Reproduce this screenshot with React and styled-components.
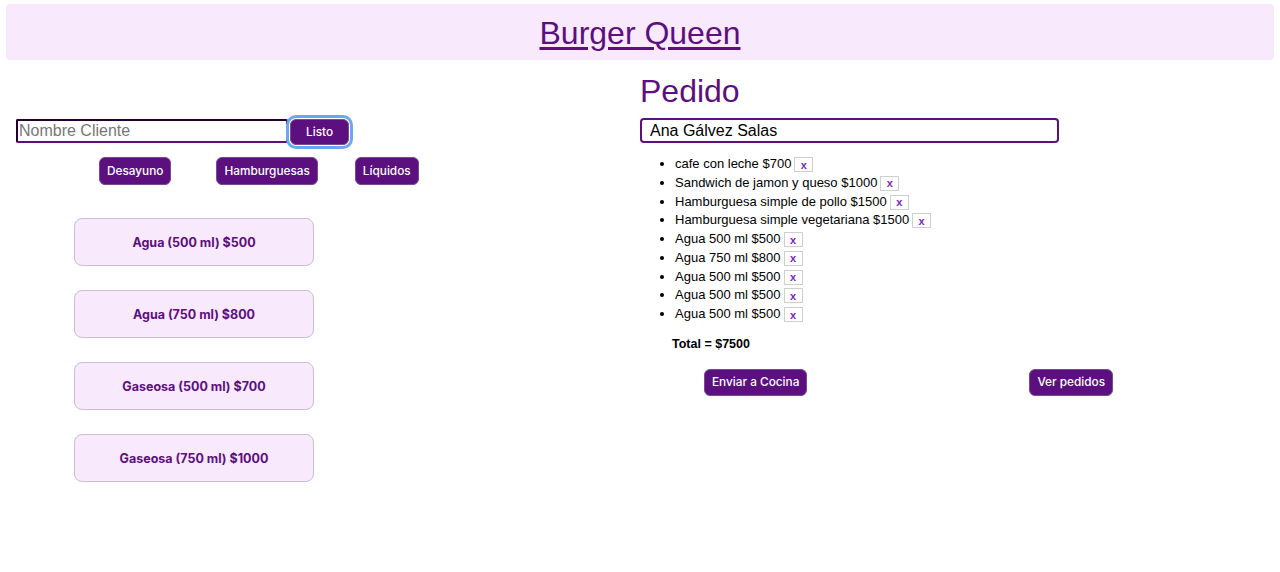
import React from 'react';
import styled, { createGlobalStyle, css } from 'styled-components';

const GlobalStyle = createGlobalStyle`
  body {
    margin: 0;
    background: #ffffff;
    font-family: "Liberation Sans", Arial, sans-serif;
  }
`;

const purple = '#5c0f7f';

const Header = styled.header`
  margin: 4px 6px 0;
  height: 56px;
  background: #f8eafc;
  border-radius: 4px;
  display: flex;
  align-items: center;
  justify-content: center;
`;

const Title = styled.a`
  font-family: "Liberation Sans", Arial, sans-serif;
  font-size: 32px;
  color: ${purple};
  text-decoration: underline;
  text-underline-offset: 3px;
  margin-top: 2px;
`;

const Main = styled.main`
  display: grid;
  grid-template-columns: 640px 640px;
`;

const LeftCol = styled.section`
  padding: 59px 0 0 16px;
`;

const NameRow = styled.div`
  display: flex;
  align-items: flex-start;
`;

const NameInput = styled.input`
  box-sizing: border-box;
  width: 272px;
  height: 24px;
  border: 2px solid ${purple};
  border-top-color: #220030;
  border-left-color: #220030;
  border-radius: 2px;
  padding: 0 1px;
  font-family: "Liberation Sans", Arial, sans-serif;
  font-size: 16px;
  outline: none;
  &::placeholder {
    color: #777777;
  }
`;

const PurpleButton = styled.button`
  height: ${(p) => p.h || 28}px;
  padding: 0 7px;
  background: ${purple};
  color: #ffffff;
  border: 1px solid #7a4a90;
  border-radius: 6px;
  font-family: Inter, "Noto Sans", sans-serif;
  font-size: 11.8px;
  font-weight: 500;
  cursor: pointer;
  margin-left: ${(p) => p.ml || 0}px;
  ${(p) =>
    p.focused &&
    css`
      outline: 3px solid #6aa8f2;
      outline-offset: 1px;
    `}
`;

const Categories = styled.div`
  display: flex;
  margin-top: 12px;
`;

const CardList = styled.div`
  display: flex;
  flex-direction: column;
  gap: 24px;
  margin: 33px 0 0 58px;
`;

const ProductCard = styled.button`
  box-sizing: border-box;
  width: 240px;
  height: 48px;
  background: #f8eafc;
  border: 1px solid #cbbdd0;
  border-radius: 8px;
  color: ${purple};
  font-family: Inter, "Noto Sans", sans-serif;
  font-size: 12.5px;
  font-weight: 700;
  cursor: pointer;
`;

const RightCol = styled.section`
  padding-top: 13px;
`;

const OrderTitle = styled.h2`
  margin: 0;
  font-size: 32px;
  font-weight: 400;
  color: ${purple};
  line-height: 37px;
`;

const ClientInput = styled.input`
  box-sizing: border-box;
  display: block;
  margin-top: 8px;
  width: 419px;
  height: 25px;
  border: 2px solid ${purple};
  border-radius: 4px;
  padding: 0 8px;
  font-family: "Liberation Sans", Arial, sans-serif;
  font-size: 16px;
  color: #000;
  outline: none;
`;

const ItemList = styled.ul`
  margin: 12px 0 0;
  padding-left: 35px;
  font-size: 13px;
  line-height: 18.75px;
`;

const RemoveButton = styled.button`
  box-sizing: border-box;
  width: 19px;
  height: 15px;
  margin-left: 3px;
  padding: 0;
  background: #ffffff;
  border: 1px solid #cfcfcf;
  color: #7a1fc2;
  font-family: "Liberation Sans", Arial, sans-serif;
  font-size: 11px;
  font-weight: 700;
  line-height: 12px;
  vertical-align: middle;
`;

const Total = styled.p`
  margin: 13px 0 0 32px;
  font-size: 12.5px;
  font-weight: 700;
`;

const Actions = styled.div`
  display: flex;
  margin-top: 18px;
`;

const items = [
  'cafe con leche $700',
  'Sandwich de jamon y queso $1000',
  'Hamburguesa simple de pollo $1500',
  'Hamburguesa simple vegetariana $1500',
  'Agua 500 ml $500',
  'Agua 750 ml $800',
  'Agua 500 ml $500',
  'Agua 500 ml $500',
  'Agua 500 ml $500',
];

const products = [
  'Agua (500 ml) $500',
  'Agua (750 ml) $800',
  'Gaseosa (500 ml) $700',
  'Gaseosa (750 ml) $1000',
];

export default function App() {
  return (
    <>
      <GlobalStyle />
      <Header>
        <Title href="#">Burger Queen</Title>
      </Header>
      <Main>
        <LeftCol>
          <NameRow>
            <NameInput placeholder="Nombre Cliente" />
            <PurpleButton h={26} ml={2} focused style={{ width: 59 }}>
              Listo
            </PurpleButton>
          </NameRow>
          <Categories>
            <PurpleButton ml={83}>Desayuno</PurpleButton>
            <PurpleButton ml={45}>Hamburguesas</PurpleButton>
            <PurpleButton ml={37}>Líquidos</PurpleButton>
          </Categories>
          <CardList>
            {products.map((p) => (
              <ProductCard key={p}>{p}</ProductCard>
            ))}
          </CardList>
        </LeftCol>
        <RightCol>
          <OrderTitle>Pedido</OrderTitle>
          <ClientInput defaultValue="Ana Gálvez Salas" />
          <ItemList>
            {items.map((item, i) => (
              <li key={i}>
                {item}
                <RemoveButton>x</RemoveButton>
              </li>
            ))}
          </ItemList>
          <Total>Total = $7500</Total>
          <Actions>
            <PurpleButton h={27} ml={64}>Enviar a Cocina</PurpleButton>
            <PurpleButton h={27} ml={222}>Ver pedidos</PurpleButton>
          </Actions>
        </RightCol>
      </Main>
    </>
  );
}
